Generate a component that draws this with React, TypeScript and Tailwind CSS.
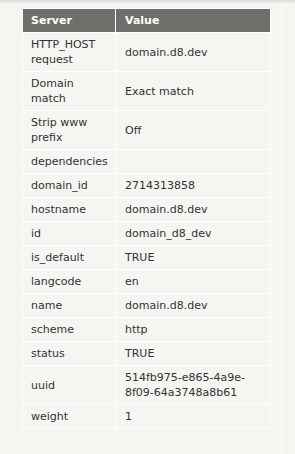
import React from "react";

const rows: [string, string][] = [
  ["HTTP_HOST request", "domain.d8.dev"],
  ["Domain match", "Exact match"],
  ["Strip www prefix", "Off"],
  ["dependencies", ""],
  ["domain_id", "2714313858"],
  ["hostname", "domain.d8.dev"],
  ["id", "domain_d8_dev"],
  ["is_default", "TRUE"],
  ["langcode", "en"],
  ["name", "domain.d8.dev"],
  ["scheme", "http"],
  ["status", "TRUE"],
  ["uuid", "514fb975-e865-4a9e-8f09-64a3748a8b61"],
  ["weight", "1"],
];

export default function App() {
  return (
    <div
      className="relative w-[295px] h-[454px] bg-[#f5f5f2] text-[#333333] text-[11px] leading-[15px]"
      style={{ fontFamily: '"DejaVu Sans", Verdana, sans-serif' }}
    >
      <div className="absolute top-0 left-0 right-0 h-[4px] bg-gradient-to-b from-[#dddddb] to-transparent" />
      <div className="w-[282px] h-full border-r border-[#fafaf8] pt-[8px] pl-[22px]">
        <div className="w-[249px] border border-white">
          <div className="flex bg-[#6f6e6a] text-white font-bold border-b border-white">
            <div className="w-[93px] border-r border-white px-[8px] py-[4px]">Server</div>
            <div className="flex-1 px-[9px] py-[4px]">Value</div>
          </div>
          {rows.map(([k, v], i) => (
            <div
              key={k}
              className={
                "flex items-stretch" +
                (i < rows.length - 1 ? " border-b border-white" : "")
              }
            >
              <div className="w-[93px] border-r border-white px-[8px] py-[4px] flex items-center min-h-[23px]">
                <span>{k}</span>
              </div>
              <div className="flex-1 px-[9px] py-[4px] flex items-center">
                <span>{v}</span>
              </div>
            </div>
          ))}
        </div>
      </div>
    </div>
  );
}
